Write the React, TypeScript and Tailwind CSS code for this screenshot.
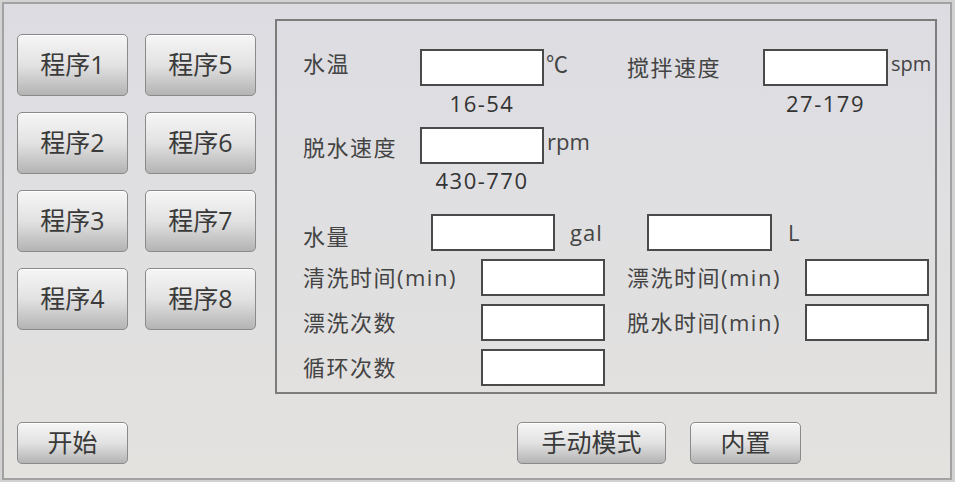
import React from "react";

const font = { fontFamily: '"Open Sans", "Noto Sans CJK SC", sans-serif' };

function Btn({ label, w, h }: { label: string; w: string; h: string }) {
  return (
    <button
      className={`${w} ${h} shrink-0 rounded-[5px] border border-[#8a8a8a] bg-linear-to-b from-[#f6f6f6] via-[#e2e2e2] to-[#b4b4b4] text-[25px] text-[#3a3a3a] shadow-[inset_0_1px_0_#ffffff]`}
    >
      {label}
    </button>
  );
}

function Input({ w = "w-[124px]" }: { w?: string }) {
  return <div className={`${w} h-[37px] shrink-0 border-2 border-[#4a4a4a] bg-white`} />;
}

const lbl = "text-[22px] tracking-[1.5px] text-[#444]";

export default function App() {
  const programs = ["程序1", "程序5", "程序2", "程序6", "程序3", "程序7", "程序4", "程序8"];
  return (
    <div style={font} className="w-[955px] h-[482px] bg-[#d2d2d2] p-[2px]">
      <div className="h-full w-[950px] border-2 border-[#a2a2a2] bg-linear-to-b from-[#dddce2] to-[#e3e2df] flex flex-col">
        <div className="flex pt-[15px] pl-[13px]">
          <div className="mt-[15px] grid grid-cols-[111px_111px] gap-x-[17px] gap-y-[16px] h-fit">
            {programs.map((p) => (
              <Btn key={p} label={p} w="w-[111px]" h="h-[62px]" />
            ))}
          </div>
          <div className="ml-[19px] w-[662px] h-[375px] border-2 border-[#7c7c7c] pl-[26px] pt-[28px] text-[#3a3a3a]">
            {/* Row 1 */}
            <div className="flex items-start">
              <div className="flex w-[324px] items-start">
                <div className={`${lbl} w-[117px] leading-[28px]`}>水温</div>
                <div className="flex flex-col items-center">
                  <Input />
                  <div className="mt-[4px] text-[22px] leading-[26px] tracking-[1.5px] text-[#333]">16-54</div>
                </div>
                <div className="ml-[2px] text-[22px] leading-[28px] text-[#444]">℃</div>
              </div>
              <div className="flex items-start">
                <div className={`${lbl} w-[136px] leading-[37px]`}>搅拌速度</div>
                <div className="flex flex-col items-center">
                  <Input w="w-[125px]" />
                  <div className="mt-[4px] text-[22px] leading-[26px] tracking-[1.5px] text-[#333]">27-179</div>
                </div>
                <div className="ml-[3px] text-[20px] leading-[30px] text-[#444]">spm</div>
              </div>
            </div>
            {/* Row 2 */}
            <div className="mt-[11px] flex items-start">
              <div className={`${lbl} w-[117px] leading-[37px] pt-[2px]`}>脱水速度</div>
              <div className="flex flex-col items-center">
                <Input />
                <div className="mt-[3px] text-[22px] leading-[26px] tracking-[1.5px] text-[#333]">430-770</div>
              </div>
              <div className="ml-[3px] text-[22px] leading-[28px] text-[#444]">rpm</div>
            </div>
            {/* Row 3 */}
            <div className="mt-[21px] flex items-center">
              <div className={`${lbl} w-[128px] self-end leading-[30px]`}>水量</div>
              <Input />
              <div className="w-[92px] pl-[15px] text-[22px] leading-[37px] tracking-[1px] text-[#444]">gal</div>
              <Input w="w-[125px]" />
              <div className="ml-[16px] text-[22px] leading-[37px] text-[#444]">L</div>
            </div>
            {/* Row 4 */}
            <div className="mt-[8px] flex items-center">
              <div className={`${lbl} w-[178px] leading-[37px]`}>清洗时间(min)</div>
              <Input />
              <div className={`${lbl} ml-[22px] w-[178px] leading-[37px]`}>漂洗时间(min)</div>
              <Input />
            </div>
            {/* Row 5 */}
            <div className="mt-[8px] flex items-center">
              <div className={`${lbl} w-[178px] leading-[37px]`}>漂洗次数</div>
              <Input />
              <div className={`${lbl} ml-[22px] w-[178px] leading-[37px]`}>脱水时间(min)</div>
              <Input />
            </div>
            {/* Row 6 */}
            <div className="mt-[8px] flex items-center">
              <div className={`${lbl} w-[178px] leading-[37px]`}>循环次数</div>
              <Input />
            </div>
          </div>
        </div>
        <div className="mt-[28px] flex pl-[13px]">
          <Btn label="开始" w="w-[111px]" h="h-[42px]" />
          <div className="ml-[389px] flex gap-[24px]">
            <Btn label="手动模式" w="w-[149px]" h="h-[42px]" />
            <Btn label="内置" w="w-[111px]" h="h-[42px]" />
          </div>
        </div>
      </div>
    </div>
  );
}
